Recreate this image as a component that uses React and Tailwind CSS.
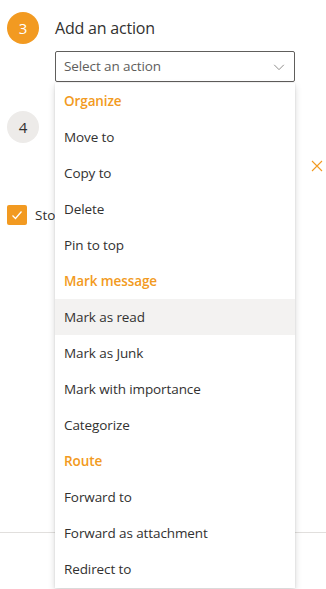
import React from 'react';

const groups = [
  { title: 'Organize', items: ['Move to', 'Copy to', 'Delete', 'Pin to top'] },
  { title: 'Mark message', items: ['Mark as read', 'Mark as Junk', 'Mark with importance', 'Categorize'] },
  { title: 'Route', items: ['Forward to', 'Forward as attachment', 'Redirect to'] },
];

const font = { fontFamily: '"Open Sans", "Noto Sans", sans-serif' };

export default function App() {
  return (
    <div className="relative w-[326px] h-[589px] bg-white overflow-hidden text-[#323130]" style={font}>
      {/* Step 3 */}
      <div className="flex items-center gap-4 pl-[7px] pt-[12px]">
        <div className="w-8 h-8 rounded-full bg-[#f29a21] text-white flex items-center justify-center text-[15px]">3</div>
        <div className="text-[16px] tracking-[-0.2px]">Add an action</div>
      </div>
      <div className="ml-[55px] mt-[7px] w-[240px] h-[31px] border border-[#605e5c] rounded-[2px] flex items-center justify-between pl-[8px] pr-[8px]">
        <span className="text-[13.5px] text-[#605e5c] tracking-[-0.1px]">Select an action</span>
        <svg width="14" height="14" viewBox="0 0 16 16" fill="none" stroke="#8a8886" strokeWidth="1.1">
          <path d="M2.5 5.5 L8 11 L13.5 5.5" />
        </svg>
      </div>

      {/* Step 4 behind the menu */}
      <div className="pl-[7px] mt-[29px]">
        <div className="w-8 h-8 rounded-full bg-[#edebe9] text-[#323130] flex items-center justify-center text-[15px]">4</div>
      </div>
      <div className="flex justify-end pr-[3px] mt-[17px]">
        <svg width="12" height="12" viewBox="0 0 12 12" stroke="#f29a21" strokeWidth="1.1">
          <path d="M1 1 L11 11 M11 1 L1 11" />
        </svg>
      </div>
      <div className="flex items-center gap-2 pl-[7px] mt-[33px]">
        <div className="w-5 h-5 rounded-[2px] bg-[#f29a21] flex items-center justify-center">
          <svg width="12" height="12" viewBox="0 0 12 12" fill="none" stroke="white" strokeWidth="1.3">
            <path d="M1.5 6.5 L4.5 9.5 L10.5 2.5" />
          </svg>
        </div>
        <span className="w-[20px] overflow-hidden whitespace-nowrap text-[13.5px]">Stop processing more rules</span>
      </div>
      <div className="mt-[307px] border-t border-[#e1dfdd]" />

      {/* Dropdown menu */}
      <div className="absolute left-[55px] top-[83px] w-[240px] bg-white shadow-[0_3px_7px_rgba(0,0,0,0.16),0_0_2px_rgba(0,0,0,0.1)] pb-[1px]">
        {groups.map((g) => (
          <div key={g.title}>
            <div className="h-9 flex items-center px-[9px] pt-[1px] text-[13.5px] font-semibold text-[#f29a21] tracking-[-0.1px]">{g.title}</div>
            {g.items.map((it) => (
              <div
                key={it}
                className={`h-9 flex items-center px-[9px] pt-[1px] text-[13.5px] tracking-[-0.1px] ${it === 'Mark as read' ? 'bg-[#f3f2f1]' : ''}`}
              >
                {it}
              </div>
            ))}
          </div>
        ))}
      </div>
    </div>
  );
}
